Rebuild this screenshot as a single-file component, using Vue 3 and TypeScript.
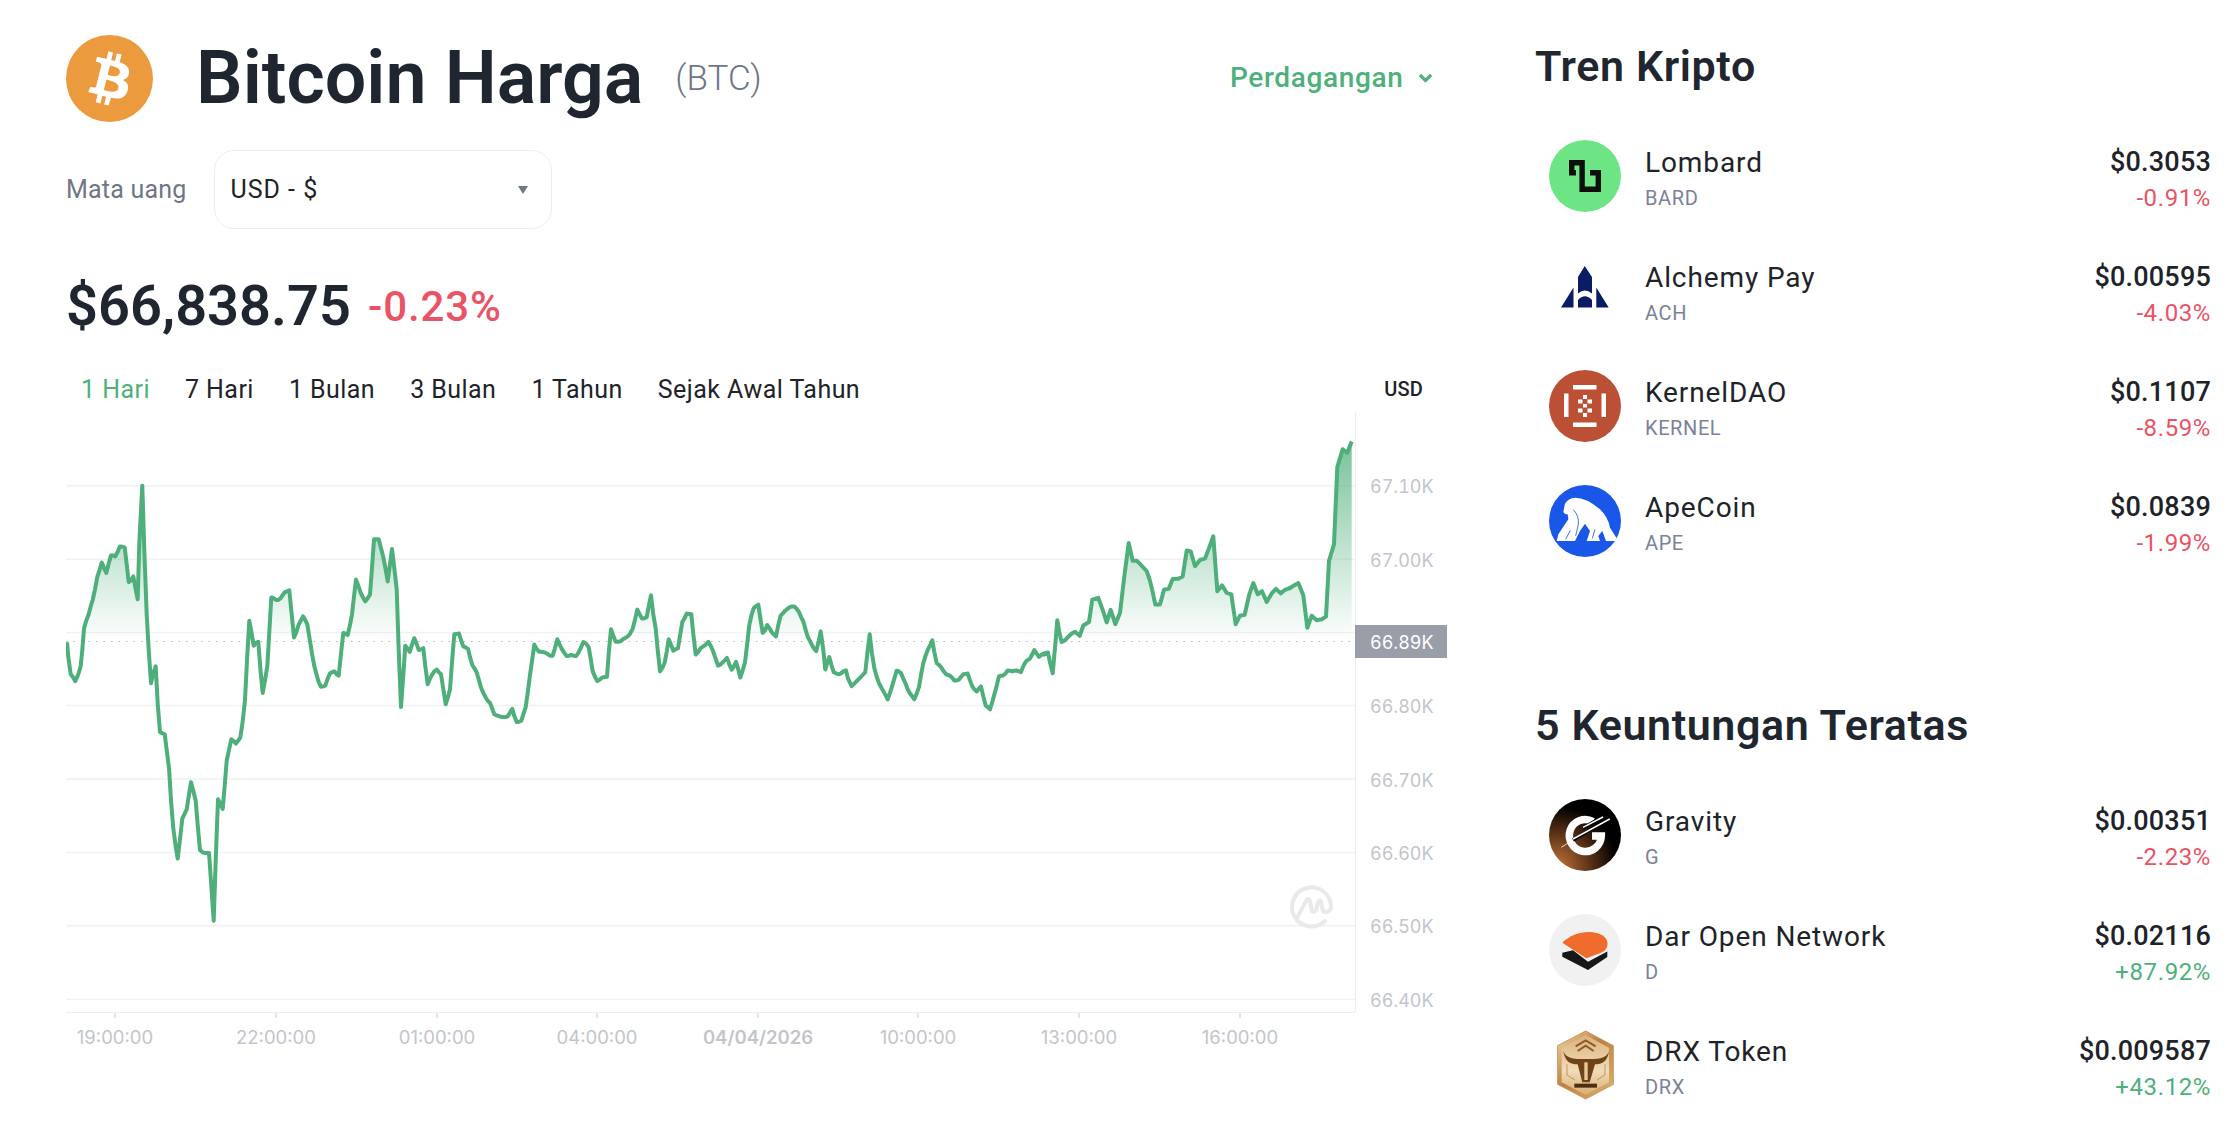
<script setup lang="ts">
const z2: number[] = [51,678,55,720,62,768,68,775,76,787,85,768,92,745,97,700,102,640,108,620,116,600,122,578,128,560,135,530,142,495,149,475,155,455,162,470,169,484,176,458,183,435,190,435,196,438,203,425,210,410,217,411,224,413,230,460,236,510,243,505,250,494,256,525,263,558,268,400,277,240,283,420,290,600,296,700,303,793,310,765,317,746,323,850,330,930,337,933,344,936,350,980,357,1030,363,1120,370,1200,377,1250,383,1284,390,1230,397,1172,404,1158,410,1146,416,1110,423,1070,430,1095,437,1122,443,1190,450,1260,457,1266,463,1268,470,1268,477,1268,484,1360,491,1458,497,1290,504,1118,511,1130,518,1145,524,1080,530,1010,537,980,544,950,551,955,558,962,565,953,571,945,578,900,585,840,591,730,598,618,605,655,611,688,618,680,625,677,631,750,638,820,645,785,652,745,658,650,664,553,671,555,678,560,685,560,692,555,699,545,705,538,712,535,718,533,725,600,732,665,739,650,745,632,752,618,759,606,765,615,772,628,779,670,786,710,793,745,800,770,806,790,813,803,820,802,826,800,833,780,840,765,847,762,853,760,860,768,866,772,873,710,880,652,887,655,893,658,900,630,906,600,912,550,918,503,925,520,932,540,939,553,946,564,953,555,960,545,966,470,972,390,979,390,986,390,993,415,1000,440,1007,475,1013,508,1020,460,1026,417,1033,470,1040,530,1046,700,1053,860,1060,770,1066,688,1073,697,1079,705,1086,685,1093,667,1100,683,1106,700,1113,698,1120,695,1126,745,1133,796,1140,780,1147,768,1153,760,1160,755,1166,762,1173,768,1180,810,1187,852,1194,832,1200,810,1206,735,1213,656,1220,655,1227,654,1233,672,1240,690,1247,693,1254,697,1260,720,1267,742,1274,752,1280,763,1287,785,1293,805,1300,820,1307,833,1313,842,1320,848,1327,865,1333,880,1340,883,1347,885,1353,887,1360,888,1367,888,1374,885,1380,875,1387,865,1393,885,1400,902,1407,901,1414,898,1420,880,1427,860,1433,820,1440,770,1447,725,1453,685,1460,697,1467,705,1474,705,1480,706,1487,708,1494,712]
const z3: number[] = [0,716,8,716,15,695,22,670,29,685,36,698,43,708,50,717,57,716,64,714,71,716,78,717,85,708,92,695,100,678,108,682,116,692,122,725,128,760,135,775,142,787,150,782,157,777,165,776,171,775,176,710,183,642,190,660,197,677,205,677,212,675,219,670,226,666,233,662,240,655,248,640,255,615,262,587,269,600,276,612,283,611,290,608,296,578,303,547,310,600,317,640,323,700,330,760,337,750,344,735,350,705,356,670,363,685,370,702,377,698,384,695,390,660,397,622,404,610,410,598,417,599,424,600,430,655,437,713,445,705,452,695,460,690,467,685,475,677,482,688,490,705,497,725,504,744,511,741,518,735,525,728,531,722,538,740,545,755,552,745,558,733,565,755,571,777,578,757,585,735,592,680,598,630,605,600,611,583,618,577,625,573,631,610,638,652,645,645,652,630,659,640,665,650,672,657,678,662,685,630,692,603,699,597,706,590,712,585,719,580,726,578,733,578,740,585,746,592,753,607,760,620,766,640,773,663,780,675,787,688,793,697,799,703,806,675,812,648,820,700,826,755,832,735,838,720,845,745,851,762,858,765,865,768,872,766,880,760,888,757,894,780,905,801,912,795,920,787,930,778,938,770,946,762,952,710,959,656,966,710,973,750,980,775,987,793,994,805,1000,815,1007,827,1013,838,1020,820,1027,800,1033,780,1040,758,1047,760,1053,765,1060,780,1067,795,1073,810,1080,822,1087,830,1093,838,1100,822,1107,803,1113,770,1120,737,1127,715,1133,700,1140,687,1147,673,1153,705,1160,737,1167,742,1173,748,1180,758,1187,767,1193,770,1200,772,1207,778,1213,785,1220,785,1227,783,1233,775,1240,768,1247,767,1253,766,1260,785,1267,802,1273,810,1280,816,1287,808,1293,802,1300,830,1307,855,1313,860,1320,866,1327,845,1333,825,1340,800,1347,773,1353,772,1360,771,1367,765,1373,757,1380,758,1387,760,1393,758,1400,757,1407,760,1413,762,1420,745,1427,733,1433,728,1440,724,1447,712,1453,700,1460,710,1467,719,1474,714,1480,710,1487,708,1494,707]
const z4: number[] = [12,615,24,612,31,635,38,657,45,600,52,538,58,565,65,587,75,583,85,575,95,568,105,564,112,568,119,573,130,550,147,542,157,492,175,488,188,515,200,543,212,515,226,547,240,522,253,440,266,365,278,405,290,405,300,412,310,420,320,428,330,450,338,475,346,503,360,503,372,470,386,468,398,446,415,445,428,440,440,382,452,384,465,417,480,403,495,400,508,375,520,350,532,473,546,460,560,477,574,480,587,547,600,528,614,526,628,480,640,455,653,480,666,473,680,497,695,478,708,468,722,478,735,470,750,466,762,460,775,455,790,482,802,555,815,528,830,538,845,536,858,530,867,405,882,368,892,195,908,155,922,163,935,138]

function mapPts(a: number[], ox: number, oy: number, sy: number): string[] {
  const out: string[] = []
  for (let i = 0; i < a.length; i += 2) {
    out.push(`${(ox + a[i] / 3).toFixed(1)},${(oy + a[i + 1] / sy).toFixed(1)}`)
  }
  return out
}
const pts = [
  ...mapPts(z2, 50, 400, 2.8),
  ...mapPts(z3, 550, 400, 2.8),
  ...mapPts(z4, 1040, 380, 2.24),
]
const baseY = 641.5
const line = pts.join(' ')
const area = `66.9,${baseY} ${line} 1351.7,${baseY}`

const gridLines = [
  { y: 485.7, label: '67.10K' }, { y: 559.3, label: '67.00K' }, { y: 632.5, label: '' },
  { y: 705.6, label: '66.80K' }, { y: 779, label: '66.70K' }, { y: 852.5, label: '66.60K' },
  { y: 925.7, label: '66.50K' }, { y: 999.4, label: '66.40K' },
]
const xTicks = [
  { x: 115, t: '19:00:00' }, { x: 276, t: '22:00:00' }, { x: 437, t: '01:00:00' },
  { x: 597, t: '04:00:00' }, { x: 758, t: '04/04/2026', b: true }, { x: 918, t: '10:00:00' },
  { x: 1079, t: '13:00:00' }, { x: 1240, t: '16:00:00' },
]
const tabs = ['1 Hari', '7 Hari', '1 Bulan', '3 Bulan', '1 Tahun', 'Sejak Awal Tahun']
const trending = [
  { k: 'bard', n: 'Lombard', s: 'BARD', p: '$0.3053', c: '-0.91%', up: false },
  { k: 'ach', n: 'Alchemy Pay', s: 'ACH', p: '$0.00595', c: '-4.03%', up: false },
  { k: 'kernel', n: 'KernelDAO', s: 'KERNEL', p: '$0.1107', c: '-8.59%', up: false },
  { k: 'ape', n: 'ApeCoin', s: 'APE', p: '$0.0839', c: '-1.99%', up: false },
]
const gainers = [
  { k: 'g', n: 'Gravity', s: 'G', p: '$0.00351', c: '-2.23%', up: false },
  { k: 'd', n: 'Dar Open Network', s: 'D', p: '$0.02116', c: '+87.92%', up: true },
  { k: 'drx', n: 'DRX Token', s: 'DRX', p: '$0.009587', c: '+43.12%', up: true },
]
const sections = [
  { title: 'Tren Kripto', rows: trending },
  { title: '5 Keuntungan Teratas', rows: gainers },
]
</script>

<template>
  <div class="page">
    <main class="left">
      <header class="head">
        <svg class="logo" viewBox="0 0 32 32">
          <circle cx="16" cy="16" r="16" fill="#ec9a3e" />
          <path fill="#fff" d="M23.189 14.02c.314-2.096-1.283-3.223-3.465-3.975l.708-2.84-1.728-.43-.69 2.765c-.454-.114-.92-.22-1.385-.326l.695-2.783L15.596 6l-.708 2.839c-.376-.086-.746-.17-1.104-.26l.002-.009-2.384-.595-.46 1.846s1.283.294 1.256.312c.7.175.826.638.805 1.006l-.806 3.235c.048.012.11.03.18.057l-.183-.045-1.13 4.532c-.086.212-.303.531-.793.41.018.025-1.256-.313-1.256-.313l-.858 1.978 2.25.561c.418.105.828.215 1.231.318l-.715 2.872 1.727.43.708-2.84c.472.127.93.245 1.378.357l-.706 2.828 1.728.43.715-2.866c2.948.558 5.164.333 6.097-2.333.752-2.146-.037-3.385-1.588-4.192 1.13-.26 1.98-1.003 2.207-2.538zm-3.95 5.538c-.533 2.147-4.148.986-5.32.695l.95-3.805c1.172.293 4.929.872 4.37 3.11zm.535-5.569c-.487 1.953-3.495.96-4.47.717l.86-3.45c.975.243 4.118.696 3.61 2.733z" />
        </svg>
        <h1 class="title">Bitcoin Harga</h1>
        <span class="ticker">(BTC)</span>
        <a class="trade">Perdagangan
          <svg class="chev" viewBox="0 0 12 8"><path d="M1.500 1.500 6 6l4.500-4.500" fill="none" stroke="#4eb07a" stroke-width="2.600" /></svg>
        </a>
      </header>

      <div class="currency">
        <span class="cur-label">Mata uang</span>
        <div class="select">
          <span>USD - $</span>
          <svg class="caret" viewBox="0 0 12 10"><path d="M1 1h10L6 9z" fill="#6f7687" /></svg>
        </div>
      </div>

      <div class="price-row">
        <span class="price">$66,838.75</span>
        <span class="delta">-0.23%</span>
      </div>

      <div class="tabs">
        <span v-for="(t, i) in tabs" :key="t" class="tab" :class="{ on: i === 0 }">{{ t }}</span>
        <span class="unit">USD</span>
      </div>

      <svg class="chart" viewBox="66 410 1381 640" width="1381" height="640">
        <defs>
          <linearGradient id="fillg" gradientUnits="userSpaceOnUse" x1="0" y1="445" x2="0" y2="641">
            <stop offset="0" stop-color="#4eaf7b" stop-opacity=".75" />
            <stop offset="1" stop-color="#4eaf7b" stop-opacity="0" />
          </linearGradient>
          <clipPath id="above"><rect x="66" y="410" width="1290" height="231.500" /></clipPath>
        </defs>
        <line v-for="g in gridLines" :key="g.y" x1="66" x2="1355" :y1="g.y" :y2="g.y" class="grid" />
        <line x1="1355.500" x2="1355.500" y1="412" y2="1012" class="axis" />
        <line x1="66" x2="1355" y1="1012.500" y2="1012.500" class="axis" />
        <line v-for="t in xTicks" :key="t.x" :x1="t.x" :x2="t.x" y1="1013" y2="1018" class="tick" />
        <polygon :points="area" fill="url(#fillg)" clip-path="url(#above)" />
        <line x1="66" x2="1355" :y1="baseY" :y2="baseY" class="base" />
        <polyline :points="line" class="price-line" />
        <text v-for="t in xTicks" :key="t.t" :x="t.x" y="1044" class="xl" :class="{ strong: t.b }">{{ t.t }}</text>
        <text v-for="g in gridLines" :key="'l' + g.y" x="1370" :y="g.y + 7.500" class="yl">{{ g.label }}</text>
        <rect x="1355" y="625" width="92" height="33" fill="#9a9ea9" />
        <text x="1370" y="648.500" class="yl cur">66.89K</text>
        <g fill="none" stroke="#e8e9e9" stroke-width="4" stroke-linecap="round" stroke-linejoin="round">
          <path d="M1325 921A19.500 19.500 0 1 1 1331 907" />
          <path d="M1297 918L1306 901Q1308 897 1310 901L1312 911Q1314 913 1316 910L1318 902Q1320 899 1321 902L1323 911Q1326 914 1331 909" />
        </g>
      </svg>
    </main>

    <aside class="right">
      <section v-for="sec in sections" :key="sec.title" class="sec">
        <h2 class="h2">{{ sec.title }}</h2>
        <div v-for="r in sec.rows" :key="r.k" class="row">
          <svg class="ico" viewBox="0 0 72 72">
            <template v-if="r.k === 'bard'">
              <circle cx="36" cy="36" r="36" fill="#6de585" />
              <path d="M27 32.700H22.700V22.700H33.100V49.300H49.300V32.700H41" fill="none" stroke="#0c0f0c" stroke-width="5.400" />
            </template>
            <template v-else-if="r.k === 'ach'">
              <path fill="#0a1c64" d="M35.700 11 43 22V38.500Q35.700 32.500 29 38.500V22ZM29 52.500V45Q35.700 37.500 43 45V52.500ZM24.500 32.500V52.500H12ZM47.300 32.500 59.700 52.500H47.300Z" />
            </template>
            <template v-else-if="r.k === 'kernel'">
              <circle cx="36" cy="36" r="36" fill="#bc5035" />
              <g fill="#fff">
                <rect x="24" y="15" width="23.500" height="4.500" />
                <rect x="24" y="52.500" width="23.500" height="4.500" />
                <rect x="15" y="23.500" width="4.500" height="23.500" />
                <rect x="52.500" y="23.500" width="4.500" height="23.500" />
                <rect x="34" y="25" width="4" height="4" />
                <rect x="29" y="29.500" width="4.500" height="4" />
                <rect x="38.500" y="29.500" width="4.500" height="4" />
                <rect x="34" y="34" width="4" height="3.500" />
                <rect x="29" y="38.500" width="4.500" height="4" />
                <rect x="38.500" y="38.500" width="4.500" height="4" />
                <rect x="34" y="43" width="4" height="4" />
              </g>
            </template>
            <template v-else-if="r.k === 'ape'">
              <circle cx="36" cy="36" r="36" fill="#1a57e8" />
              <g transform="translate(-4 -4) scale(.3333)">
                <path fill="#fff" d="M55 92 60 68Q70 52 90 50 125 50 165 85 190 110 195 140L215 172 212 180H183L172 150 160 165 165 180H125L135 150 120 128 105 150 90 180H35L40 160 70 115 68 100Q58 100 55 92Z" />
                <path fill="none" stroke="#1a57e8" stroke-width="2.500" d="M85 86Q103 105 100 130L92 165M62 175 76 148M150 145 142 172" />
              </g>
            </template>
            <template v-else-if="r.k === 'g'">
              <defs>
                <radialGradient id="gg" cx=".1" cy=".95" r=".85">
                  <stop offset="0" stop-color="#c5763c" />
                  <stop offset=".55" stop-color="#5d3217" />
                  <stop offset="1" stop-color="#000" />
                </radialGradient>
              </defs>
              <circle cx="36" cy="36" r="36" fill="url(#gg)" />
              <path d="M44 22.500A16 16 0 1 0 52.300 37H43" fill="none" stroke="#fff" stroke-width="7.500" />
              <path d="M12.300 48.300 25.700 40" stroke="#fff" stroke-width=".8" />
              <path d="M24 41 61 19M34 29 55 17" stroke="#000" stroke-width="3.600" />
              <path d="M24 40 60.700 20M34 28.300 54 18" stroke="#fff" stroke-width="1.500" />
            </template>
            <template v-else-if="r.k === 'd'">
              <circle cx="36" cy="36" r="36" fill="#f1f1f1" />
              <path fill="#ef6c2c" d="M13.300 28.700C20 22 30 18 40 18c11 0 18.500 5 18.500 11.500 0 5-3 8-7 9.500L37.300 44.300Z" />
              <path fill="#17171a" d="M13.300 38.700 24 36.300 39 47.700 58.300 37.500V43L39 56 13.300 42.700Z" />
            </template>
            <template v-else>
              <defs>
                <linearGradient id="dg" x1="0" y1="0" x2="1" y2="1">
                  <stop offset="0" stop-color="#f1d9ac" />
                  <stop offset=".45" stop-color="#b97f3d" />
                  <stop offset="1" stop-color="#e2b676" />
                </linearGradient>
                <linearGradient id="dh" x1="0" y1="0" x2="0" y2="1">
                  <stop offset="0" stop-color="#dcb27c" />
                  <stop offset=".6" stop-color="#f0dcb8" />
                  <stop offset="1" stop-color="#d9ae72" />
                </linearGradient>
              </defs>
              <g transform="translate(-4 -4) scale(.3333)">
                <path fill="url(#dg)" stroke="#c8965a" stroke-width="3" stroke-linejoin="round" d="M122 18 205 62V178L122 222 38 178V62Z" />
                <path fill="url(#dh)" d="M122 30 192 68V172L122 210 50 172V68Z" />
                <path fill="none" stroke="#8b5a28" stroke-width="6" d="M92 64 122 46 152 64M98 78 122 62 146 78" />
                <path fill="#6f4318" d="M55 78C62 98 80 100 98 102H148C168 100 186 98 192 78 188 110 170 118 150 118L134 172H112L98 118C76 118 60 110 55 78Z" />
                <path fill="#e9cb98" d="M118 112H128V165H118Z" />
                <path fill="none" stroke="#a9773d" stroke-width="2" d="M66 118V150L90 165M180 118V150L156 165" />
                <rect x="88" y="176" width="68" height="12" fill="#4e2f10" />
              </g>
            </template>
          </svg>
          <div class="info">
            <div class="name">{{ r.n }}</div>
            <div class="sym">{{ r.s }}</div>
          </div>
          <div class="vals">
            <div class="val">{{ r.p }}</div>
            <div class="chg" :class="r.up ? 'up' : 'down'">{{ r.c }}</div>
          </div>
        </div>
      </section>
    </aside>
  </div>
</template>

<style>
html, body { margin: 0; background: #fff; overflow: hidden; }
</style>

<style scoped>
.page { width: 2230px; height: 1124px; display: flex; overflow: hidden; background: #fff; color: #1e2329; font-family: Roboto, "Noto Sans", sans-serif; }
.left { width: 1381px; margin-left: 66px; padding-top: 35px; flex: none; }
.right { width: 676px; margin-left: 88px; flex: none; padding-top: 36px; }

.head { display: flex; align-items: center; height: 87px; width: 1376px; }
.logo { width: 87px; height: 87px; flex: none; }
.title { margin: 0 0 0 43px; font-size: 73.500px; font-weight: 600; line-height: 87px; color: #1f2630; }
.ticker { margin-left: 32px; font-size: 35px; font-weight: 300; color: #6f7687; }
.trade { margin-left: auto; display: flex; align-items: center; gap: 15px; width: 212px; padding-bottom: 2px; font-size: 28px; font-weight: 500; letter-spacing: .65px; color: #4eb07a; }
.chev { width: 15px; height: 10px; }

.currency { display: flex; align-items: center; margin-top: 28px; gap: 28px; }
.cur-label { font-size: 25px; letter-spacing: .2px; color: #6f7687; }
.select { width: 338px; height: 79px; box-sizing: border-box; border: 1px solid #eceef0; border-radius: 20px; display: flex; align-items: center; justify-content: space-between; padding: 0 22px 0 15px; font-size: 25px; letter-spacing: 1px; color: #1e2329; }
.caret { width: 12px; height: 10px; }

.price-row { display: flex; align-items: center; gap: 17px; height: 60px; margin-top: 47px; }
.price { font-size: 56px; font-weight: 600; color: #1f2630; }
.delta { font-size: 42px; font-weight: 500; letter-spacing: .9px; color: #ea5365; }

.tabs { display: flex; align-items: center; height: 38px; margin-top: 34px; padding-left: 15px; gap: 35px; font-size: 25px; letter-spacing: .45px; color: #1e2329; }
.tab.on { color: #4eb07a; }
.unit { margin-left: auto; margin-right: 24px; font-size: 20px; font-weight: 500; letter-spacing: .2px; }

.chart { display: block; margin-top: 2px; }
.grid { stroke: #f0f1f2; stroke-width: 1.500; }
.axis { stroke: #eceef0; stroke-width: 1; }
.tick { stroke: #c8cbd1; stroke-width: 1; }
.base { stroke: #b5b8bf; stroke-width: 1; stroke-dasharray: 1.500 6; }
.price-line { fill: none; stroke: #4eaf7b; stroke-width: 4; stroke-linejoin: round; }
.xl { font-family: Inter, sans-serif; font-size: 18.500px; fill: #c2c5cc; text-anchor: middle; }
.xl.strong { font-weight: 600; }
.yl { font-family: Inter, sans-serif; font-size: 18px; font-variant-numeric: tabular-nums; fill: #c2c5cc; }
.yl.cur { fill: #fff; }

.sec { margin-bottom: 116.500px; }
.h2 { margin: 0 0 22.500px; height: 60px; line-height: 60px; font-size: 43px; font-weight: 600; letter-spacing: .6px; color: #1f2630; }
.row { display: flex; align-items: center; height: 115px; padding-left: 14px; }
.ico { width: 72px; height: 72px; flex: none; }
.info { margin-left: 24px; flex: 1; padding-top: 8px; }
.name { font-size: 28px; line-height: 36px; font-weight: 400; letter-spacing: .9px; color: #1e2329; position: relative; top: 1px; }
.sym { font-size: 20px; line-height: 36px; letter-spacing: .6px; color: #7a8299; }
.vals { text-align: right; padding-top: 8px; }
.val { font-size: 27px; line-height: 36px; font-weight: 500; letter-spacing: .2px; color: #1e2329; }
.chg { font-size: 24px; line-height: 36px; letter-spacing: .6px; }
.chg.down { color: #ea5365; }
.chg.up { color: #4eb07a; }
</style>
